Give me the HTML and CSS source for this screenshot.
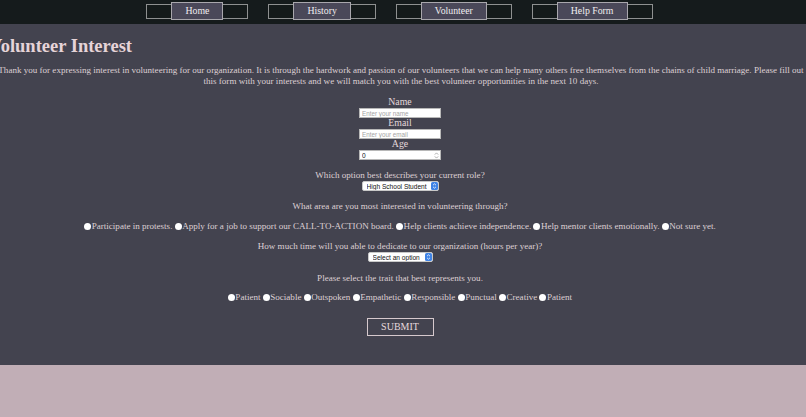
FILE: index.html
```html
<!DOCTYPE html>
<html lang="en">
<head>
<meta charset="utf-8">
<title>Volunteer Interest</title>
<link rel="stylesheet" href="styles.css">
</head>
<body>
<nav class="topnav">
  <ul class="navlist">
    <li><a class="navlink" href="#"><span class="navlabel">Home</span></a></li>
    <li><a class="navlink" href="#"><span class="navlabel">History</span></a></li>
    <li><a class="navlink" href="#"><span class="navlabel">Volunteer</span></a></li>
    <li><a class="navlink" href="#"><span class="navlabel">Help Form</span></a></li>
  </ul>
</nav>
<main class="content">
  <h1 class="title">Volunteer Interest</h1>
  <p class="intro">Thank you for expressing interest in volunteering for our organization. It is through the hardwork and passion of our volunteers that we can help many others free themselves from the chains of child marriage. Please fill out this form with your interests and we will match you with the best volunteer opportunities in the next 10 days.</p>
  <form class="form">
    <label class="label" for="name">Name</label>
    <input class="field" id="name" type="text" placeholder="Enter your name">
    <label class="label" for="email">Email</label>
    <input class="field" id="email" type="text" placeholder="Enter your email">
    <label class="label" for="age">Age</label>
    <span class="numwrap">
      <input class="field field-num" id="age" type="number" value="0">
      <svg class="spin" width="5" height="7" viewBox="0 0 5 7"><path d="M0.8 2.6 L2.5 0.9 L4.2 2.6 M0.8 4.4 L2.5 6.1 L4.2 4.4" fill="none" stroke="#9a9a9a" stroke-width="0.8"/></svg>
    </span>

    <p class="question q-role">Which option best describes your current role?</p>
    <span class="selwrap sel-role">
      <select class="select"><option>High School Student</option></select>
      <svg class="selicon" width="7" height="8" viewBox="0 0 7 8"><rect x="0" y="0" width="7" height="8" rx="1.6" fill="#3f83e6"/><path d="M2 3.2 L3.5 1.8 L5 3.2 M2 4.8 L3.5 6.2 L5 4.8" fill="none" stroke="#fff" stroke-width="0.8"/></svg>
    </span>

    <p class="question q-area">What area are you most interested in volunteering through?</p>
    <div class="radios r-area">
      <label class="opt"><input class="radio" type="radio" name="area">Participate in protests.</label>
      <label class="opt"><input class="radio" type="radio" name="area">Apply for a job to support our CALL-TO-ACTION board.</label>
      <label class="opt"><input class="radio" type="radio" name="area">Help clients achieve independence.</label>
      <label class="opt"><input class="radio" type="radio" name="area">Help mentor clients emotionally.</label>
      <label class="opt"><input class="radio" type="radio" name="area">Not sure yet.</label>
    </div>

    <p class="question q-time">How much time will you able to dedicate to our organization (hours per year)?</p>
    <span class="selwrap sel-time">
      <select class="select"><option>Select an option</option></select>
      <svg class="selicon" width="7" height="8" viewBox="0 0 7 8"><rect x="0" y="0" width="7" height="8" rx="1.6" fill="#3f83e6"/><path d="M2 3.2 L3.5 1.8 L5 3.2 M2 4.8 L3.5 6.2 L5 4.8" fill="none" stroke="#fff" stroke-width="0.8"/></svg>
    </span>

    <p class="question q-trait">Please select the trait that best represents you.</p>
    <div class="radios r-trait">
      <label class="opt"><input class="radio" type="radio" name="trait">Patient</label>
      <label class="opt"><input class="radio" type="radio" name="trait">Sociable</label>
      <label class="opt"><input class="radio" type="radio" name="trait">Outspoken</label>
      <label class="opt"><input class="radio" type="radio" name="trait">Empathetic</label>
      <label class="opt"><input class="radio" type="radio" name="trait">Responsible</label>
      <label class="opt"><input class="radio" type="radio" name="trait">Punctual</label>
      <label class="opt"><input class="radio" type="radio" name="trait">Creative</label>
      <label class="opt"><input class="radio" type="radio" name="trait">Patient</label>
    </div>

    <button class="submit" type="button">SUBMIT</button>
  </form>
</main>
<footer class="bottom"></footer>
</body>
</html>
```
FILE: styles.css
```css
html, body {
  margin: 0;
  padding: 0;
  overflow-x: hidden;
}
body {
  background: #c1aeb6;
  font-family: "Liberation Serif", "Times New Roman", serif;
  color: #ddd0d4;
}
.topnav {
  background: #151b1c;
  height: 24px;
}
.navlist {
  list-style: none;
  margin: 0;
  padding: 0 7px 0 0;
  height: 24px;
  display: flex;
  justify-content: center;
  align-items: flex-start;
  gap: 20px;
}
.navlist li {
  margin-top: 4px;
}
.navlink {
  display: flex;
  align-items: center;
  height: 13px;
  padding: 0 24px;
  border: 1px solid #8e9090;
  background: #141a1a;
  text-decoration: none;
}
.navlabel {
  display: block;
  height: 16px;
  line-height: 16px;
  padding: 0 13px;
  border: 1px solid #a9a7ad;
  background: #4a4859;
  color: #f0eef0;
  font-size: 9.8px;
  margin-top: -1px;
}
.content {
  background: #43434f;
  padding: 1px 0 29px;
}
.title {
  font-size: 18.5px;
  line-height: 21px;
  margin: 11px 0 0 -11px;
  color: #e6d4d8;
  font-weight: bold;
}
.intro {
  font-size: 9.05px;
  line-height: 11px;
  text-align: center;
  margin: 8px -4px 0 -8px;
}
.form {
  display: flex;
  flex-direction: column;
  align-items: center;
  margin-top: 10px;
  padding-right: 6px;
}
.label {
  display: block;
  font-size: 9.8px;
  line-height: 10px;
  color: #e4d8dc;
}
.field {
  display: block;
  box-sizing: border-box;
  width: 82px;
  height: 10px;
  margin: 1px 0 0;
  padding: 0 2px;
  border: 0.5px solid #b8b8b8;
  background: #fff;
  font-family: "Liberation Sans", Arial, sans-serif;
  font-size: 6.3px;
  color: #111;
  outline: none;
}
.field::placeholder {
  color: #a4a4a4;
}
.numwrap {
  position: relative;
  display: block;
  margin-top: 1px;
}
.numwrap .field {
  margin-top: 0;
}
.field-num {
  -moz-appearance: textfield;
  appearance: textfield;
  font-size: 6.6px;
}
.field-num::-webkit-inner-spin-button,
.field-num::-webkit-outer-spin-button {
  -webkit-appearance: none;
  margin: 0;
}
.spin {
  position: absolute;
  right: 2px;
  top: 1.5px;
}
.question {
  margin: 10px 0 0;
  font-size: 9.05px;
  line-height: 10px;
}
.selwrap {
  position: relative;
  display: block;
  margin-top: 1px;
}
.select {
  display: block;
  -webkit-appearance: none;
  appearance: none;
  box-sizing: border-box;
  height: 10px;
  padding: 0 0 0 4px;
  margin: 0;
  border: 0.5px solid #c9c9c9;
  border-radius: 2px;
  background: #fff;
  font-family: "Liberation Sans", Arial, sans-serif;
  font-size: 6.6px;
  line-height: 9px;
  color: #111;
}
.sel-role .select {
  width: 77px;
}
.sel-time .select {
  width: 65px;
}
.selicon {
  position: absolute;
  right: 1px;
  top: 1px;
}
.q-area {
  margin-top: 10px;
}
.radios {
  margin-top: 10px;
  font-size: 9.05px;
  line-height: 10px;
  text-align: center;
}
.r-trait {
  margin-top: 9px;
}
.opt {
  white-space: nowrap;
}
.radio {
  -webkit-appearance: none;
  appearance: none;
  display: inline-block;
  width: 7px;
  height: 7px;
  margin: 0 0.5px 0 0;
  border-radius: 50%;
  background: #fff;
  border: none;
  vertical-align: -0.5px;
}
.q-trait {
  margin-top: 11px;
}
.submit {
  margin-top: 16px;
  width: 67px;
  height: 18px;
  padding: 0;
  border: 1px solid #d6c9cd;
  background: transparent;
  color: #e6dade;
  font-family: "Liberation Serif", "Times New Roman", serif;
  font-size: 10px;
  line-height: 16px;
}
.bottom {
  height: 60px;
}
```
